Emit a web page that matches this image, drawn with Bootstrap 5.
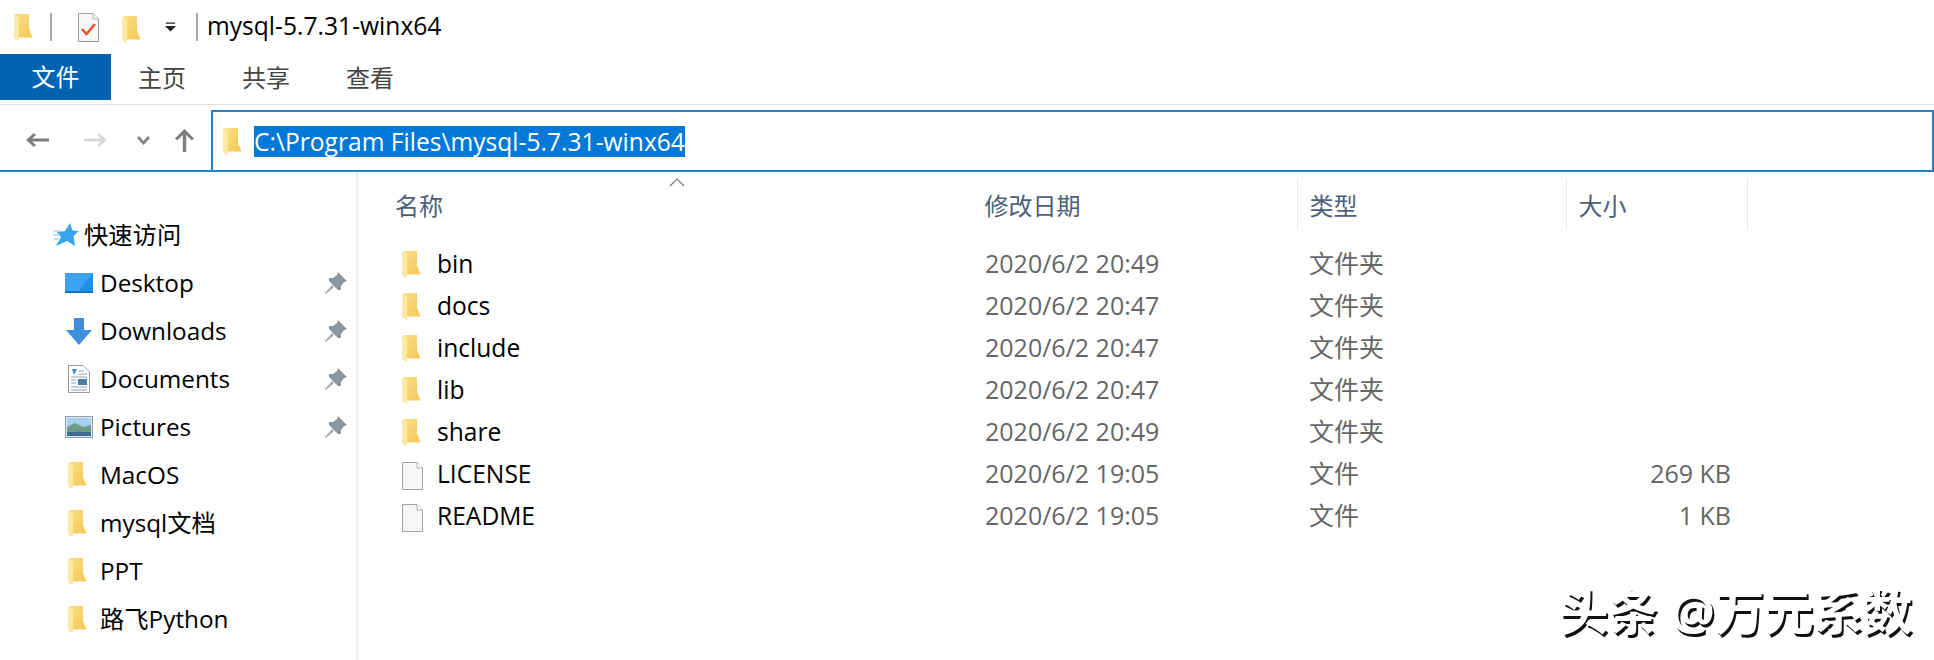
<!DOCTYPE html>
<html lang="en">
<head>
<meta charset="UTF-8">
<title>mysql-5.7.31-winx64</title>
<link rel="stylesheet" href="https://cdn.jsdelivr.net/npm/bootstrap@5.3.0/dist/css/bootstrap.min.css">
<style>
    body {
        font-family: "Open Sans", "Noto Sans CJK SC", sans-serif;
        font-size: 24.3px;
        background: #fff;
        color: #000;
        width: 1934px;
        height: 660px;
        overflow: hidden;
        position: relative;
    }
    .title-bar { height: 54px; padding-left: 14px; }
    .title-name { font-size: 24.6px; margin-left: 9px; margin-top: -2px; }
    .title-sep { width: 2px; height: 28px; background: #a8a8a8; }
    .ribbon-tabs { height: 46px; font-size: 24px; color: #444; }
    .tab-item { width: 104px; text-align: center; padding-top: 2px; margin-left: -1px; margin-right: 1px; }
    .tab-file { width: 111px; background: #0063b1; color: #fff; height: 46px; line-height: 46px; text-align: center; }
    .ribbon-line { height: 1px; background: #d5dfe9; margin-top: 4px; }
    .addr-row { height: 67px; padding-top: 5px; border-bottom: 2px solid #2a7fc9; }
    .addr-box { flex: 1; height: 60px; border: 2px solid #2a7fc9; border-bottom: 0; padding-left: 10px; font-size: 24.6px; }
    .addr-sel { background: #0078d7; color: #fff; line-height: 31px; margin-left: 13px; }
    .side-pane { width: 358px; border-right: 2px solid #f0f0f0; height: 489px; padding-top: 39px; }
    .side-item { height: 48px; padding-left: 63px; }
    .side-quick { padding-left: 53px; }
    .side-folder { flex: none; margin: 0 14px 0 5px; }
    .pin { margin-left: auto; margin-right: 9px; }
    .file-pane { width: 1420px; padding: 6px 0 0 14px; }
    .file-table { table-layout: fixed; width: 1402px; margin: 0; }
    .file-table th {
        font-weight: 400; color: #4c607a; font-size: 24px; height: 52px; padding: 3px 0 0 12px;
        border-right: 1px solid #e8e8e8; vertical-align: middle;
    }
    .file-table td { height: 42px; padding: 0 0 0 12px; vertical-align: middle; color: #666; font-size: 25px; }
    .file-table td.fname { color: #000; font-size: 24.6px; padding-left: 32px; }
    .file-table td.fdate { padding-left: 13px; }
    .file-table td.fsize { padding-right: 16px; text-align: right; }
    .file-table th.hname { border-right-color: transparent; padding-left: 23px; }
    .file-table .gap-row td { height: 13px; }
    .sort-mark { position: absolute; left: 669px; top: 178px; }
    .watermark {
        position: absolute; left: 1559px; top: 581px; font-size: 49.4px; line-height: 60px;
        font-weight: 700; color: #fff; text-shadow: 2px 3px 0 #111;
    }
    .fname svg { margin: 0 17px 0 -2px; vertical-align: -5px; }
    .fname svg.doc-icon { margin-right: 14px; vertical-align: -7px; }
</style>
</head>
<body>
<svg width="0" height="0" class="position-absolute">
    <defs>
        <linearGradient id="folderFill" x1="0" y1="0" x2="1" y2="1">
            <stop offset="0" stop-color="#fbe08a"/>
            <stop offset="1" stop-color="#f5c552"/>
        </linearGradient>
        <symbol id="ico-folder" viewBox="0 0 18 27">
            <path d="M0 1 L3 0 H15 V15 L18 22 V23.500 H5 V27 L0 24 Z" fill="url(#folderFill)"/>
            <path d="M0 1 L5 3 V27 L0 24 Z" fill="#fbe9a6"/>
        </symbol>
        <symbol id="ico-pin" viewBox="0 0 22 22">
            <path d="M13 0 L22 9 L19 10 L16 14 L16 18 L13 18 L4 9 L4 6 L8 6 L12 3 Z" fill="#8e969e"/>
            <path d="M7 13 L0 21 L1 22 L9 15 Z" fill="#a6acb2"/>
        </symbol>
        <symbol id="ico-file" viewBox="0 0 21 28">
            <path d="M.5.5 H15 L20.500 6 V27.500 H.5 Z" fill="#f7f7f7" stroke="#a3a3a3"/>
            <path d="M15 .5 V6 H20.500" fill="#fff" stroke="#b5b5b5"/>
        </symbol>
    </defs>
</svg>

<div class="title-bar d-flex align-items-center">
    <svg width="18" height="27"><use href="#ico-folder"/></svg>
    <div class="title-sep" style="margin-left:18px"></div>
    <svg style="margin-left:26px" width="21" height="29" viewBox="0 0 21 29">
        <path d="M.5.5 H15 L20.500 6 V28.500 H.5 Z" fill="#f8f8f8" stroke="#9a9a9a"/>
        <path d="M15 .5 V6 H20.500" fill="#fff" stroke="#b0b0b0"/>
        <path d="M4 16 L8.500 21 L17 11" fill="none" stroke="#e2562a" stroke-width="2.600"/>
    </svg>
    <svg style="margin-left:23px;margin-top:5px" width="18" height="27"><use href="#ico-folder"/></svg>
    <svg style="margin-left:25px" width="11" height="10" viewBox="0 0 12 10">
        <path d="M1 0 H11 V1.500 H1 Z M0 4 H12 L6 10 Z" fill="#222"/>
    </svg>
    <div class="title-sep" style="margin-left:20px"></div>
    <div class="title-name">mysql-5.7.31-winx64</div>
</div>

<div class="ribbon-tabs d-flex align-items-center">
    <div class="tab-file">文件</div>
    <div class="tab-item">主页</div>
    <div class="tab-item">共享</div>
    <div class="tab-item">查看</div>
</div>
<div class="ribbon-line"></div>

<div class="addr-row d-flex">
    <div class="d-flex align-items-center" style="width:211px;padding-left:26px">
        <svg width="23" height="16" viewBox="0 0 23 16"><path d="M0 8 L8 1 L10 3 L6 6.500 H23 V9.500 H6 L10 13 L8 15 Z" fill="#7d7d7d"/></svg>
        <svg style="margin-left:35px" width="23" height="16" viewBox="0 0 23 16"><path d="M23 8 L15 1 L13 3 L17 6.500 H0 V9.500 H17 L13 13 L15 15 Z" fill="#d9d9d9"/></svg>
        <svg style="margin-left:30px" width="13" height="9" viewBox="0 0 13 9"><path d="M1 1 L6.500 7 L12 1" fill="none" stroke="#808080" stroke-width="2.600"/></svg>
        <svg style="margin-left:25px" width="19" height="23" viewBox="0 0 19 23"><path d="M9.500 0 L19 9.500 L16.800 11.600 L11.200 6 V23 H7.800 V6 L2.200 11.600 L0 9.500 Z" fill="#7d7d7d"/></svg>
    </div>
    <div class="addr-box d-flex align-items-center">
        <svg width="18" height="27"><use href="#ico-folder"/></svg>
        <span class="addr-sel">C:\Program Files\mysql-5.7.31-winx64</span>
    </div>
</div>

<div class="d-flex">
    <div class="side-pane">
        <div class="side-item side-quick d-flex align-items-center">
            <svg width="26" height="24" viewBox="0 0 26 24" style="margin-right:5px">
                <path d="M17 0 L19.500 7.500 L26 8 L20.500 13 L22 23 L14 18 L3 23 L8 14 L4 9 L12 8 Z" fill="#36a4ee"/>
                <path d="M1 8 H7 M0 12 H7 M1 16 H6" stroke="#a9d7f6" stroke-width="1.500"/>
            </svg>
            快速访问
        </div>
        <div class="side-item d-flex align-items-center">
            <svg height="20" viewBox="0 0 28 20" style="width:28px;margin-right:7px;margin-left:2px">
                <rect width="28" height="20" fill="#1f8fe8"/><path d="M0 0 H28 L14 18 H0 Z" fill="#3aa2f0"/><rect y="18" width="28" height="2" fill="#0f75c4"/>
            </svg>
            Desktop
            <svg class="pin" width="22" height="22"><use href="#ico-pin"/></svg>
        </div>
        <div class="side-item d-flex align-items-center">
            <svg height="27" viewBox="0 0 26 27" style="width:26px;margin-right:8px;margin-left:3px">
                <path d="M8 0 H18 V12 H26 L13 27 L0 12 H8 Z" fill="#3f8fdf"/>
            </svg>
            Downloads
            <svg class="pin" width="22" height="22"><use href="#ico-pin"/></svg>
        </div>
        <div class="side-item d-flex align-items-center">
            <svg height="28" viewBox="0 0 22 28" style="width:22px;margin-right:10px;margin-left:5px">
                <path d="M.5.5 H15 L21.500 7 V27.500 H.5 Z" fill="#fff" stroke="#9a9a9a"/>
                <path d="M4 4 H9 L6 10 Z" fill="#3b8fd8"/>
                <path d="M11 6 H16 M11 9 H19 M3 12 H19 M3 22 H19 M3 25 H19" stroke="#8aa3bd"/>
                <rect x="10" y="14" width="9" height="6" fill="#4d7da5"/>
                <path d="M3 15 H8 M3 18 H8" stroke="#8aa3bd"/>
            </svg>
            Documents
            <svg class="pin" width="22" height="22"><use href="#ico-pin"/></svg>
        </div>
        <div class="side-item d-flex align-items-center">
            <svg height="22" viewBox="0 0 28 22" style="width:28px;margin-right:7px;margin-left:2px">
                <rect x=".5" y=".5" width="27" height="21" fill="#dfe9f2" stroke="#8f9db0"/>
                <rect x="2" y="2" width="24" height="9" fill="#a9d0ea"/>
                <path d="M2 11 L10 7 L18 11 L26 9 V20 H2 Z" fill="#6f9a88"/>
                <rect x="2" y="16" width="24" height="4" fill="#3f6c8e"/>
            </svg>
            Pictures
            <svg class="pin" width="22" height="22"><use href="#ico-pin"/></svg>
        </div>
        <div class="side-item d-flex align-items-center"><svg class="side-folder" width="18" height="27"><use href="#ico-folder"/></svg>MacOS</div>
        <div class="side-item d-flex align-items-center"><svg class="side-folder" width="18" height="27"><use href="#ico-folder"/></svg>mysql文档</div>
        <div class="side-item d-flex align-items-center"><svg class="side-folder" width="18" height="27"><use href="#ico-folder"/></svg>PPT</div>
        <div class="side-item d-flex align-items-center"><svg class="side-folder" width="18" height="27"><use href="#ico-folder"/></svg>路飞Python</div>
    </div>

    <div class="file-pane">
        <table class="table table-borderless file-table">
            <colgroup>
                <col style="width:600px"><col style="width:325px"><col style="width:269px"><col style="width:181px"><col>
            </colgroup>
            <thead>
                <tr>
                    <th class="hname">名称</th>
                    <th>修改日期</th>
                    <th>类型</th>
                    <th>大小</th>
                    <th class="border-0"></th>
                </tr>
            </thead>
            <tbody>
                <tr class="gap-row"><td colspan="5"></td></tr>
                <tr><td class="fname"><svg width="18" height="27"><use href="#ico-folder"/></svg>bin</td><td class="fdate">2020/6/2 20:49</td><td>文件夹</td><td></td><td></td></tr>
                <tr><td class="fname"><svg width="18" height="27"><use href="#ico-folder"/></svg>docs</td><td class="fdate">2020/6/2 20:47</td><td>文件夹</td><td></td><td></td></tr>
                <tr><td class="fname"><svg width="18" height="27"><use href="#ico-folder"/></svg>include</td><td class="fdate">2020/6/2 20:47</td><td>文件夹</td><td></td><td></td></tr>
                <tr><td class="fname"><svg width="18" height="27"><use href="#ico-folder"/></svg>lib</td><td class="fdate">2020/6/2 20:47</td><td>文件夹</td><td></td><td></td></tr>
                <tr><td class="fname"><svg width="18" height="27"><use href="#ico-folder"/></svg>share</td><td class="fdate">2020/6/2 20:49</td><td>文件夹</td><td></td><td></td></tr>
                <tr><td class="fname"><svg class="doc-icon" width="21" height="28"><use href="#ico-file"/></svg>LICENSE</td><td class="fdate">2020/6/2 19:05</td><td>文件</td><td class="fsize">269 KB</td><td></td></tr>
                <tr><td class="fname"><svg class="doc-icon" width="21" height="28"><use href="#ico-file"/></svg>README</td><td class="fdate">2020/6/2 19:05</td><td>文件</td><td class="fsize">1 KB</td><td></td></tr>
            </tbody>
        </table>
    </div>
</div>

<svg class="sort-mark" width="16" height="9" viewBox="0 0 16 9"><path d="M1 8 L8 1 L15 8" fill="none" stroke="#777" stroke-width="1.200"/></svg>
<div class="watermark">头条 @万元系数</div>
</body>
</html>
